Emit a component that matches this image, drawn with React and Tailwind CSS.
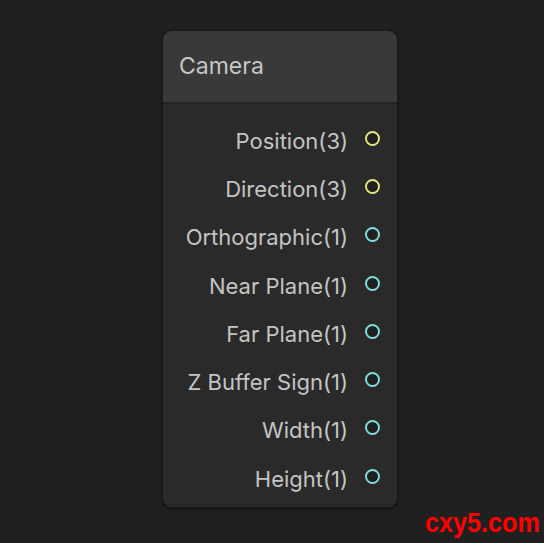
const ports = [
  { label: "Position(3)", color: "border-[#e6e67a]" },
  { label: "Direction(3)", color: "border-[#e6e67a]" },
  { label: "Orthographic(1)", color: "border-[#7fdbe2]" },
  { label: "Near Plane(1)", color: "border-[#7fdbe2]" },
  { label: "Far Plane(1)", color: "border-[#7fdbe2]" },
  { label: "Z Buffer Sign(1)", color: "border-[#7fdbe2]" },
  { label: "Width(1)", color: "border-[#7fdbe2]" },
  { label: "Height(1)", color: "border-[#7fdbe2]" },
];

export default function App() {
  return (
    <div className="w-[544px] h-[543px] bg-[#202020] relative overflow-hidden font-['Inter','Noto_Sans',sans-serif]">
      <div className="flex pt-[30px] pl-[162px]">
        {/* Node card */}
        <div className="w-[236px] rounded-[10px] bg-[#2a2a2a] border border-[#1b1b1b] shadow-[0_1px_3px_rgba(0,0,0,0.5)] overflow-hidden">
          <div className="h-[73px] bg-[#393939] border-b-2 border-[#242424] flex items-center px-[16px]">
            <span className="text-[23px] text-[#c6c6c6]">Camera</span>
          </div>
          <div className="flex flex-col pt-[13px] pb-[4px]">
            {ports.map((p) => (
              <div key={p.label} className="h-[48.3px] flex items-center justify-end pr-[17px]">
                <span className="text-[22px] text-[#c4c4c4]">{p.label}</span>
                <span className={`ml-[17px] mb-[6px] w-[15px] h-[15px] rounded-full border-2 ${p.color} bg-[#202020]`} />
              </div>
            ))}
          </div>
        </div>
      </div>
      <span className="absolute left-[425px] top-[509px] text-[28px] leading-none font-bold text-[#ff0000] font-['Liberation_Sans',sans-serif] scale-x-[0.9] origin-left">
        cxy5.com
      </span>
    </div>
  );
}
